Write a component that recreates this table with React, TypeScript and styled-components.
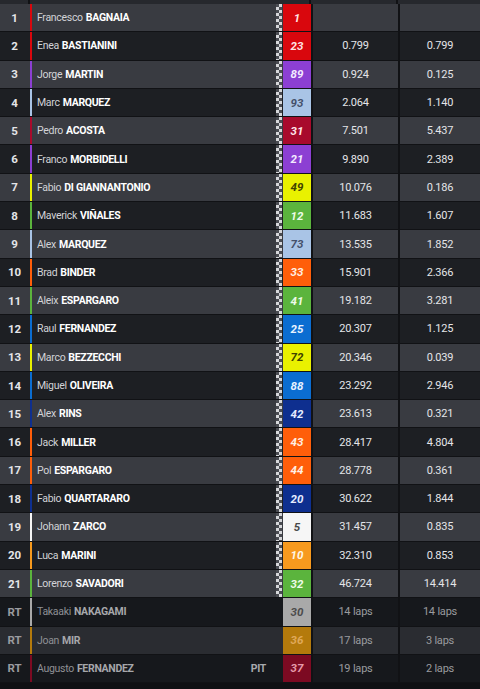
import styled, { createGlobalStyle } from 'styled-components';

interface IRider {
  pos: string;
  first: string;
  last: string;
  num: string;
  color: string;
  ink: string;
  gap: string;
  prev: string;
  retired?: boolean;
  pit?: boolean;
}

const RED = '#d9070d';
const PURPLE = '#8c3fd3';
const SKY = '#a9c4e6';
const KTM = '#ff5e0a';
const GREEN = '#5bb43d';
const YELLOW = '#e9f100';
const BLUE = '#0b6dd1';
const NAVY = '#0e2f8f';

const riders: IRider[] = [
  { pos: '1', first: 'Francesco', last: 'BAGNAIA', num: '1', color: RED, ink: '#ffe3e3', gap: '', prev: '' },
  { pos: '2', first: 'Enea', last: 'BASTIANINI', num: '23', color: RED, ink: '#ffe3e3', gap: '0.799', prev: '0.799' },
  { pos: '3', first: 'Jorge', last: 'MARTIN', num: '89', color: PURPLE, ink: '#f3eaff', gap: '0.924', prev: '0.125' },
  { pos: '4', first: 'Marc', last: 'MARQUEZ', num: '93', color: SKY, ink: '#44506a', gap: '2.064', prev: '1.140' },
  { pos: '5', first: 'Pedro', last: 'ACOSTA', num: '31', color: '#a80a2c', ink: '#ffe6ea', gap: '7.501', prev: '5.437' },
  { pos: '6', first: 'Franco', last: 'MORBIDELLI', num: '21', color: PURPLE, ink: '#f3eaff', gap: '9.890', prev: '2.389' },
  { pos: '7', first: 'Fabio', last: 'DI GIANNANTONIO', num: '49', color: YELLOW, ink: '#3f4200', gap: '10.076', prev: '0.186' },
  { pos: '8', first: 'Maverick', last: 'VIÑALES', num: '12', color: GREEN, ink: '#eefbe8', gap: '11.683', prev: '1.607' },
  { pos: '9', first: 'Alex', last: 'MARQUEZ', num: '73', color: SKY, ink: '#44506a', gap: '13.535', prev: '1.852' },
  { pos: '10', first: 'Brad', last: 'BINDER', num: '33', color: KTM, ink: '#fff0e4', gap: '15.901', prev: '2.366' },
  { pos: '11', first: 'Aleix', last: 'ESPARGARO', num: '41', color: GREEN, ink: '#eefbe8', gap: '19.182', prev: '3.281' },
  { pos: '12', first: 'Raul', last: 'FERNANDEZ', num: '25', color: BLUE, ink: '#e8f2ff', gap: '20.307', prev: '1.125' },
  { pos: '13', first: 'Marco', last: 'BEZZECCHI', num: '72', color: YELLOW, ink: '#3f4200', gap: '20.346', prev: '0.039' },
  { pos: '14', first: 'Miguel', last: 'OLIVEIRA', num: '88', color: BLUE, ink: '#e8f2ff', gap: '23.292', prev: '2.946' },
  { pos: '15', first: 'Alex', last: 'RINS', num: '42', color: NAVY, ink: '#e6ecff', gap: '23.613', prev: '0.321' },
  { pos: '16', first: 'Jack', last: 'MILLER', num: '43', color: KTM, ink: '#fff0e4', gap: '28.417', prev: '4.804' },
  { pos: '17', first: 'Pol', last: 'ESPARGARO', num: '44', color: KTM, ink: '#fff0e4', gap: '28.778', prev: '0.361' },
  { pos: '18', first: 'Fabio', last: 'QUARTARARO', num: '20', color: NAVY, ink: '#e6ecff', gap: '30.622', prev: '1.844' },
  { pos: '19', first: 'Johann', last: 'ZARCO', num: '5', color: '#f6f6f6', ink: '#4a4a4a', gap: '31.457', prev: '0.835' },
  { pos: '20', first: 'Luca', last: 'MARINI', num: '10', color: '#f79a1e', ink: '#fff6e6', gap: '32.310', prev: '0.853' },
  { pos: '21', first: 'Lorenzo', last: 'SAVADORI', num: '32', color: GREEN, ink: '#eefbe8', gap: '46.724', prev: '14.414' },
  { pos: 'RT', first: 'Takaaki', last: 'NAKAGAMI', num: '30', color: '#a9a9a9', ink: '#4c4c4c', gap: '14 laps', prev: '14 laps', retired: true },
  { pos: 'RT', first: 'Joan', last: 'MIR', num: '36', color: '#b47a0c', ink: '#e0a95a', gap: '17 laps', prev: '3 laps', retired: true },
  { pos: 'RT', first: 'Augusto', last: 'FERNANDEZ', num: '37', color: '#7c0a22', ink: '#e79aaa', gap: '19 laps', prev: '2 laps', retired: true, pit: true },
];

function rowShade(index: number, retired?: boolean) {
  if (retired) return index % 2 === 0 ? '#2a2c31' : '#16181c';
  return index % 2 === 0 ? '#393b41' : '#1d1f23';
}

export default function App() {
  return (
    <>
      <GlobalStyle />
      <Board>
        <TopStrip>
          <span />
          <span />
          <span />
          <span />
        </TopStrip>
        {riders.map((r, i) => (
          <Row key={r.pos + r.num} $bg={rowShade(i, r.retired)} $dim={r.retired}>
            <Pos>{r.pos}</Pos>
            <TeamBar $color={r.color} />
            <Name>
              <span>{r.first}</span> <b>{r.last}</b>
              {r.pit && <Pit>PIT</Pit>}
            </Name>
            <Checker $show={!r.retired} />
            <NumBox $color={r.color} $ink={r.ink}>
              {r.num}
            </NumBox>
            <Time>{r.gap}</Time>
            <Time>{r.prev}</Time>
          </Row>
        ))}
        <Bottom />
      </Board>
    </>
  );
}

//****************************************************//

const GlobalStyle = createGlobalStyle`
  html, body {
    margin: 0;
    padding: 0;
    background: #101114;
  }
  body {
    font-family: Roboto, 'Liberation Sans', sans-serif;
  }
`;

const Board = styled.div`
  width: 480px;
  height: 689px;
  display: flex;
  flex-direction: column;
  background: #121316;
  overflow: hidden;
`;

const TopStrip = styled.div`
  height: 4px;
  display: grid;
  grid-template-columns: 30px 281px 87px 82px;
  background: #26282d;

  span {
    border-right: 2px solid #111215;
  }
  span:last-child {
    border-right: none;
  }
`;

const Row = styled.div<{ $bg: string; $dim?: boolean }>`
  height: 27.3px;
  border-bottom: 1px solid #111215;
  display: grid;
  grid-template-columns: 30px 3px 1fr 6px 29px 87px 82px;
  align-items: stretch;
  background: ${(p) => p.$bg};
  color: ${(p) => (p.$dim ? '#9a9b9f' : '#e4e5e8')};

  b {
    color: ${(p) => (p.$dim ? '#a6a7ab' : '#ffffff')};
  }
  span {
    color: ${(p) => (p.$dim ? '#8f9095' : '#d2d3d7')};
  }
`;

const Pos = styled.div`
  display: flex;
  align-items: center;
  justify-content: center;
  font-size: 11.5px;
  font-weight: 700;
  padding-right: 1px;
`;

const TeamBar = styled.div<{ $color: string }>`
  background: ${(p) => p.$color};
  margin-right: 1px;
`;

const Name = styled.div`
  display: flex;
  align-items: center;
  gap: 3px;
  padding-left: 4px;
  font-size: 10.5px;
  letter-spacing: -0.3px;
  white-space: nowrap;

  b {
    font-weight: 700;
  }
`;

const Pit = styled.em`
  margin-left: auto;
  margin-right: 10px;
  font-style: normal;
  font-weight: 700;
  font-size: 10.5px;
  color: #a8a9ad;
`;

const Checker = styled.div<{ $show: boolean }>`
  background: ${(p) =>
    p.$show ? 'repeating-conic-gradient(#d6d7da 0 25%, #4a4c52 0 50%) 0 0 / 6px 6px' : 'transparent'};
`;

const NumBox = styled.div<{ $color: string; $ink: string }>`
  display: flex;
  align-items: center;
  justify-content: center;
  background: ${(p) => p.$color};
  color: ${(p) => p.$ink};
  font-size: 11.5px;
  font-weight: 700;
  font-style: italic;
  margin-left: 1px;
`;

const Time = styled.div`
  display: flex;
  align-items: center;
  justify-content: center;
  border-left: 2px solid #111215;
  font-size: 11px;
  letter-spacing: -0.2px;
`;

const Bottom = styled.div`
  flex: 1;
  background: #0f1013;
`;
